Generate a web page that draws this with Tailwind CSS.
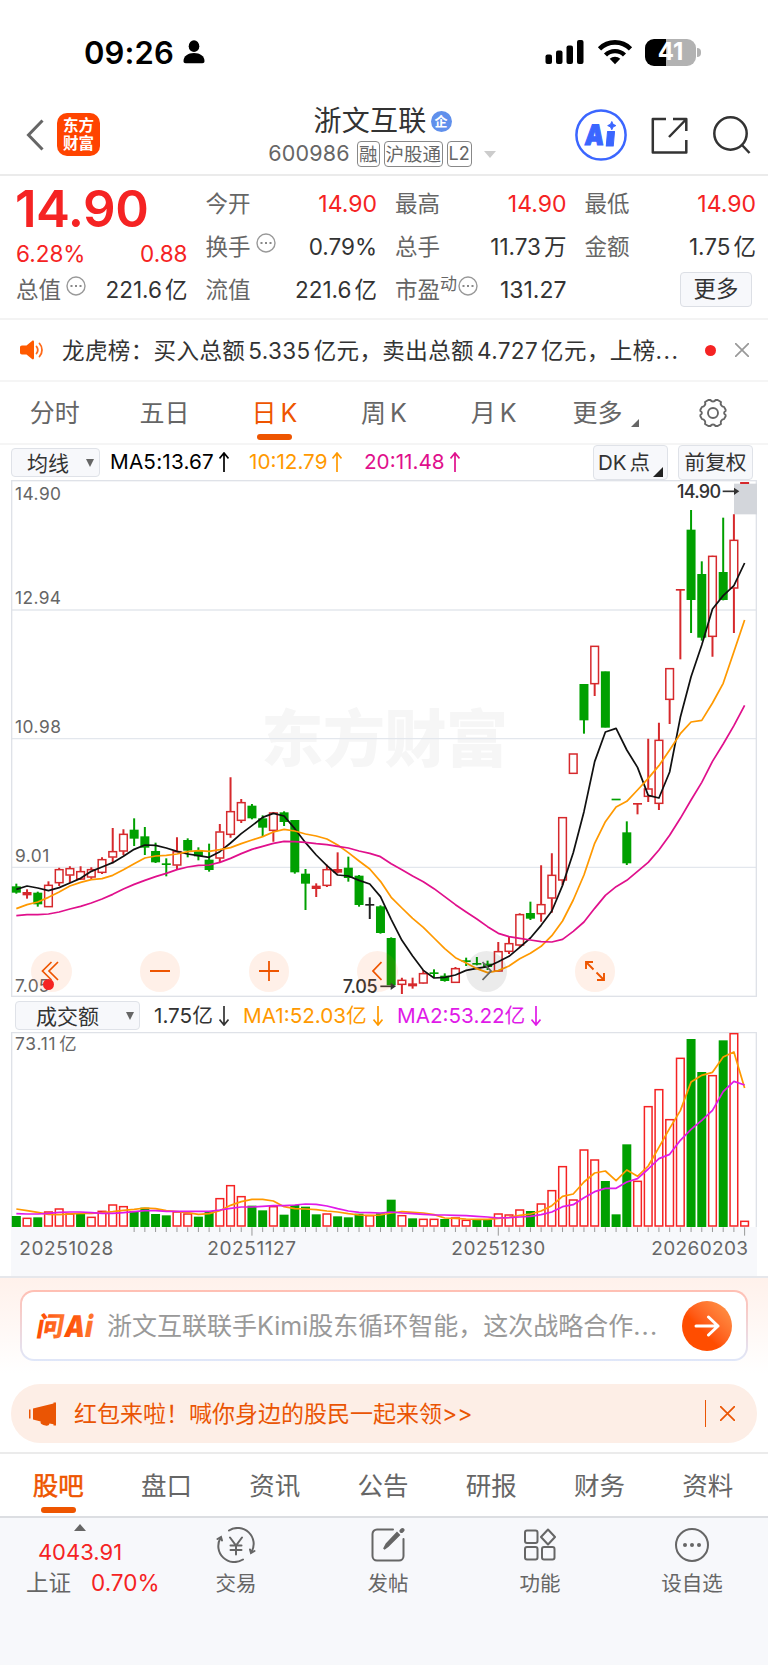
<!DOCTYPE html>
<html lang="zh-CN">
<head>
  <meta charset="UTF-8">
  <meta name="viewport" content="width=device-width, initial-scale=1.0">
  <title>浙文互联 600986</title>
  <script src="https://cdn.jsdelivr.net/npm/@tailwindcss/browser@4"></script>
</head>
<body class="w-[768px] h-[1665px] overflow-hidden bg-white text-[#333] font-['Inter','Noto_Sans_CJK_SC',sans-serif] leading-none whitespace-nowrap flex flex-col">

  <!-- Status Bar -->
  <div class="h-[104px] pl-[84px] pr-[67px] flex items-center justify-between text-black">
    <div class="flex items-center gap-[9px]">
      <span class="text-[31px] font-semibold tracking-[0.100px]">09:26</span>
      <svg class="w-[22px] h-[24px]" viewBox="0 0 22 24"><ellipse cx="11" cy="6.2" rx="5.3" ry="5.9"/><path d="M0.5 21c0-5 4.500-8 10.500-8s10.500 3 10.500 8c0 1.500-.8 2.200-2.200 2.200H2.700C1.300 23.200 .5 22.500 .5 21z"/></svg>
    </div>
    <div class="flex items-center">
      <svg class="w-[40px] h-[26px] mr-[12px]" viewBox="0 0 40 26"><rect x="0.500" y="15.500" width="6.500" height="9.500" rx="2"/><rect x="11" y="11.500" width="6.500" height="13.500" rx="2"/><rect x="21.500" y="6.500" width="6.500" height="18.500" rx="2"/><rect x="32" y="1" width="6.500" height="24" rx="2"/></svg>
      <svg class="w-[36px] h-[26px] mr-[12px]" viewBox="0 0 36 26" fill="none" stroke="#000"><path d="M2.500 9.800a22 22 0 0 1 31 0" stroke-width="4.600"/><path d="M8.500 16a13.500 13.500 0 0 1 19 0" stroke-width="4.400"/><path d="M18 25.300l-5.300-5.500a7.600 7.600 0 0 1 10.600 0z" fill="#000" stroke="none"/></svg>
      <div class="relative w-[51px] h-[27px] rounded-[9px] bg-linear-to-r from-black from-41% to-[#b2b2b2] to-41% flex items-center justify-center text-white text-[24px] font-bold">41</div>
      <div class="w-[4px] h-[9px] ml-[1px] rounded-r-full bg-[#b2b2b2]"></div>
    </div>
  </div>

  <!-- Header -->
  <header class="h-[72px] border-b-2 border-[#ebebeb] grid grid-cols-3 relative">
    <div class="flex items-center pl-[26px] gap-[13px] pb-[9px]">
      <svg class="w-[18px] h-[32px]" viewBox="0 0 18 32" fill="none" stroke="#666" stroke-width="3"><path d="M16.500 1.500L2.500 16l14 14.500"/></svg>
      <div class="w-[43px] h-[43px] rounded-[10px] bg-[#ff4400] text-white font-bold text-[15.500px] leading-[18px] flex flex-col items-center justify-center"><span>东方</span><span>财富</span></div>
    </div>
    <div class="flex flex-col items-center">
      <div class="flex items-center h-[32px] gap-[4px] pt-[2px] pr-[3px]">
        <span class="text-[28px] tracking-[0.300px]">浙文互联</span>
        <span class="size-[21px] rounded-full bg-[#6090ec] text-white text-[13px] font-bold flex items-center justify-center">企</span>
      </div>
      <div class="flex items-center h-[37px] gap-[4px] pb-[1px] pr-[4px] text-[#666]">
        <span class="text-[21.500px] tracking-[0.150px] mr-[3px]">600986</span>
        <span class="h-[26px] w-[23px] border-[1.500px] border-[#888] rounded-[4px] text-[18.500px] flex items-center justify-center">融</span>
        <span class="h-[26px] w-[59px] border-[1.500px] border-[#888] rounded-[4px] text-[18.500px] flex items-center justify-center">沪股通</span>
        <span class="h-[26px] w-[25px] border-[1.500px] border-[#888] rounded-[4px] text-[18px] flex items-center justify-center">L2</span>
        <svg class="w-[12px] h-[7px] ml-[8px]" viewBox="0 0 12 7"><path d="M0 0h12L6 7z" fill="#ccc"/></svg>
      </div>
    </div>
    <div class="flex items-center justify-end pr-[17px] pb-[8px]">
      <svg class="w-[52px] h-[52px] mr-[24px]" viewBox="0 0 52 52"><circle cx="26" cy="26" r="24.600" fill="none" stroke="#3b66ff" stroke-width="2.500"/><g fill="#3b66ff" transform="translate(3 0) skewX(-5)"><text x="9.500" y="36" font-size="28" font-weight="900" font-family="Inter" textLength="19" lengthAdjust="spacingAndGlyphs" stroke="#3b66ff" stroke-width="1.200">A</text><path d="M31.500 22.500h7v14.500h-7z" stroke="#3b66ff" stroke-linejoin="round"/></g><path d="M36.800 12.500l1.300 2.800 2.800 1.300-2.800 1.300-1.300 2.800-1.300-2.800-2.800-1.300 2.800-1.300z" fill="#3b66ff" stroke="#3b66ff"/></svg>
      <svg class="w-[37px] h-[37px] mr-[25px]" viewBox="0 0 37 37" fill="none" stroke="#333" stroke-width="2.500" stroke-linejoin="round"><path d="M15 2H1.800v33.500h33.500V23M22 2h13.300v12M35 2.500L18 20"/></svg>
      <svg class="w-[38px] h-[38px]" viewBox="0 0 38 38" fill="none" stroke="#333" stroke-width="2.500"><circle cx="17.500" cy="17.500" r="16.200"/><path d="M28.500 28.500l8 8.500"/></svg>
    </div>
  </header>

  <!-- Quote -->
  <section class="h-[144px] border-b-2 border-[#f3f3f3] pl-[16px] pr-[12px] pt-[7px] grid grid-cols-4 gap-x-[18px] text-[22.500px]">
    <div class="flex flex-col text-[#f52323]">
      <div class="h-[50px] -ml-[1px] flex items-center text-[51px] font-semibold tracking-[-0.500px]">14.90</div>
      <div class="h-[42px] flex items-center justify-between"><span>6.28%</span><span>0.88</span></div>
      <div class="h-[31px] flex items-center text-[#333]">
        <span class="text-[#666]">总值</span>
        <svg class="size-[20px] ml-[5px] mb-[9px]" viewBox="0 0 20 20"><circle cx="10" cy="10" r="9" fill="none" stroke="#999" stroke-width="1.400"/><path d="M4.500 9h2v2h-2zM9 9h2v2H9zM13.500 9h2v2h-2z" fill="#888"/></svg>
        <span class="ml-auto">221.6<span class="ml-[3px]">亿</span></span>
      </div>
    </div>
    <div class="flex flex-col">
      <div class="h-[43px] flex items-center justify-between"><span class="text-[#666]">今开</span><span class="text-[#f52323] text-[23px]">14.90</span></div>
      <div class="h-[43px] flex items-center">
        <span class="text-[#666]">换手</span>
        <svg class="size-[20px] ml-[5px] mb-[9px]" viewBox="0 0 20 20"><circle cx="10" cy="10" r="9" fill="none" stroke="#999" stroke-width="1.400"/><path d="M4.500 9h2v2h-2zM9 9h2v2H9zM13.500 9h2v2h-2z" fill="#888"/></svg>
        <span class="ml-auto">0.79%</span>
      </div>
      <div class="h-[43px] flex items-center justify-between"><span class="text-[#666]">流值</span><span>221.6<span class="ml-[3px]">亿</span></span></div>
    </div>
    <div class="flex flex-col">
      <div class="h-[43px] flex items-center justify-between"><span class="text-[#666]">最高</span><span class="text-[#f52323] text-[23px]">14.90</span></div>
      <div class="h-[43px] flex items-center justify-between"><span class="text-[#666]">总手</span><span>11.73<span class="ml-[3px]">万</span></span></div>
      <div class="h-[43px] flex items-center">
        <span class="text-[#666]">市盈</span><span class="text-[17px] text-[#666] mb-[13px]">动</span>
        <svg class="size-[20px] ml-[1px] mb-[9px]" viewBox="0 0 20 20"><circle cx="10" cy="10" r="9" fill="none" stroke="#999" stroke-width="1.400"/><path d="M4.500 9h2v2h-2zM9 9h2v2H9zM13.500 9h2v2h-2z" fill="#888"/></svg>
        <span class="ml-auto text-[23px]">131.27</span>
      </div>
    </div>
    <div class="flex flex-col">
      <div class="h-[43px] flex items-center justify-between"><span class="text-[#666]">最低</span><span class="text-[#f52323] text-[23px]">14.90</span></div>
      <div class="h-[43px] flex items-center justify-between"><span class="text-[#666]">金额</span><span>1.75<span class="ml-[3px]">亿</span></span></div>
      <div class="h-[43px] flex items-center justify-end pr-[4px]"><button class="w-[72px] h-[35px] mb-[3px] rounded-[4px] border border-[#dcdfe5] bg-[#f7f8fb] pt-[1px]">更多</button></div>
    </div>
  </section>

  <!-- News -->
  <section class="h-[62px] border-b-2 border-[#f5f5f5] pl-[20px] pr-[19px] flex items-center text-[22.500px]">
    <svg class="w-[24px] h-[20px] mr-[18px]" viewBox="0 0 24 20"><path d="M2 5.500h4.500L12 1c1-.8 2-.3 2 1v16c0 1.300-1 1.800-2 1l-5.500-4.500H2c-1.300 0-2-.7-2-2v-5c0-1.300.7-2 2-2z" fill="#ff5a00"/><path d="M16.500 6.500c1.500 2 1.500 5 0 7M19.500 3.500c3.300 3.500 3.300 9.500 0 13" fill="none" stroke="#ff6a1a" stroke-width="1.800" stroke-linecap="round"/></svg>
    <span class="tracking-[0.400px] pt-[2px]">龙虎榜：买入总额<span class="mx-[3px]">5.335</span>亿元，卖出总额<span class="mx-[3px]">4.727</span>亿元，上榜<span class="tracking-[1.500px]">...</span></span>
    <span class="size-[11px] rounded-full bg-[#f52323] ml-auto mr-[19px]"></span>
    <svg class="size-[14px]" viewBox="0 0 14 14" stroke="#999" stroke-width="1.700"><path d="M0 0l14 14M14 0L0 14"/></svg>
  </section>

  <!-- Period Tabs -->
  <nav class="h-[63px] border-b-2 border-[#f5f5f5] grid grid-cols-7 text-[25px] text-[#666]">
    <div class="flex items-center justify-center pt-[2px]">分时</div>
    <div class="flex items-center justify-center pt-[2px]">五日</div>
    <div class="relative flex items-center justify-center pt-[2px] gap-[4px] text-[#ee5500]">日<span>K</span><div class="absolute bottom-[3px] w-[35px] h-[6px] rounded-[3px] bg-[#ee5500]"></div></div>
    <div class="flex items-center justify-center pt-[2px] gap-[4px]">周<span>K</span></div>
    <div class="flex items-center justify-center pt-[2px] gap-[4px]">月<span>K</span></div>
    <div class="flex items-center justify-center pt-[2px] pl-[5px] gap-[9px]">更多<svg class="w-[8px] h-[8px] mt-[18px]" viewBox="0 0 8 8"><path d="M8 0v8H0z" fill="#666"/></svg></div>
    <div class="flex items-center justify-center">
      <svg class="w-[30px] h-[30px]" viewBox="0 0 30 30" fill="none" stroke="#666" stroke-width="1.900" stroke-linejoin="round"><path d="M10.300 2h2.200c.9 2 4.100 2 5 0h2.200l3.300 2c-1 2.200.6 4.800 3 4.900l1.600 2.900v1.200c-2 1.200-2 2.800 0 4v1.200l-1.600 2.900c-2.400.1-4 2.700-3 4.900l-3.300 2h-2.200c-.9-2-4.100-2-5 0h-2.200l-3.300-2c1-2.200-.6-4.800-3-4.900l-1.600-2.900v-1.200c2-1.200 2-2.800 0-4v-1.200L4 8.900c2.400-.1 4-2.700 3-4.900z"/><circle cx="15" cy="15" r="5"/></svg>
    </div>
  </nav>

  <!-- Moving Averages -->
  <div class="h-[35px] px-[11px] flex items-center text-[20.700px]">
    <div class="w-[89px] h-[29px] rounded-[4px] border border-[#dfe2e8] bg-[#f7f8fb] flex items-center justify-between pl-[15px] pr-[5px] pt-[1px] text-[21px]">均线<svg class="w-[8px] h-[8px]" viewBox="0 0 8 8"><path d="M0 0h8L4 8z" fill="#666"/></svg></div>
    <div class="ml-[10px] w-[139px] flex items-center gap-[5px] text-black"><span class="tracking-[0.200px]">MA5:13.67</span><svg class="w-[10px] h-[20px]" viewBox="0 0 10 20" fill="none" stroke="currentColor" stroke-width="1.700"><path d="M5 20V1M0.500 6.500L5 1l4.500 5.500"/></svg></div>
    <div class="w-[115px] flex items-center gap-[5px] text-[#ff9900]"><span>10:12.79</span><svg class="w-[10px] h-[20px]" viewBox="0 0 10 20" fill="none" stroke="currentColor" stroke-width="1.700"><path d="M5 20V1M0.500 6.500L5 1l4.500 5.500"/></svg></div>
    <div class="flex items-center gap-[5px] text-[#e0108c]"><span>20:11.48</span><svg class="w-[10px] h-[20px]" viewBox="0 0 10 20" fill="none" stroke="currentColor" stroke-width="1.700"><path d="M5 20V1M0.500 6.500L5 1l4.500 5.500"/></svg></div>
    <div class="ml-auto mr-[10px] w-[75px] h-[35px] rounded-[4px] border border-[#dfe2e8] bg-[#f7f8fb] relative flex items-center pl-[4px] pt-[2px] gap-[3px] text-[20.500px]">DK<span>点</span><svg class="absolute right-[4px] bottom-[2px] w-[10px] h-[10px]" viewBox="0 0 10 10"><path d="M10 0v10H0z" fill="#222"/></svg></div>
    <div class="mr-[4px] w-[75px] h-[35px] rounded-[4px] border border-[#dfe2e8] bg-[#f7f8fb] flex items-center justify-center pt-[2px] text-[20.700px]">前复权</div>
  </div>

  <!-- Candles -->
  <div class="relative h-[517px] px-[11px]">
    <svg id="kline" class="w-[746px] h-[517px]" viewBox="33 -780 2238 1551"></svg>
    <!-- Chart controls -->
    <div class="absolute left-[31px] top-[471px] flex gap-[68.300px]">
      <div class="relative size-[40.500px] rounded-full bg-[#ff6a1a]/10 flex items-center justify-center">
        <svg class="w-[18px] h-[20px] mr-[3px]" viewBox="0 0 18 20" fill="none" stroke="#ee5500" stroke-width="1.700"><path d="M10.500 1L1.500 10l9 9M17 1l-9 9 9 9"/></svg>
        <span class="absolute left-[12px] top-[28px] size-[11px] rounded-full bg-[#f52323]"></span>
      </div>
      <div class="size-[40.500px] rounded-full bg-[#ff6a1a]/10 flex items-center justify-center"><div class="w-[20px] h-[2px] bg-[#ee5500]"></div></div>
      <div class="size-[40.500px] rounded-full bg-[#ff6a1a]/10 flex items-center justify-center"><svg class="size-[20px]" viewBox="0 0 20 20" stroke="#ee5500" stroke-width="1.800"><path d="M10 0v20M0 10h20"/></svg></div>
      <div class="size-[40.500px] rounded-full bg-[#ff6a1a]/10 flex items-center justify-center"><svg class="w-[10px] h-[20px] mr-[2px]" viewBox="0 0 10 20" fill="none" stroke="#ee5500" stroke-width="1.700"><path d="M9.500 1L1 10l8.500 9"/></svg></div>
      <div class="size-[40.500px] rounded-full bg-black/8 flex items-center justify-center"><svg class="w-[10px] h-[20px] ml-[2px]" viewBox="0 0 10 20" fill="none" stroke="#666" stroke-width="1.700"><path d="M.5 1L9 10 .5 19"/></svg></div>
      <div class="size-[40.500px] rounded-full bg-[#ff6a1a]/10 flex items-center justify-center"><svg class="size-[20px]" viewBox="0 0 20 20" fill="none" stroke="#ee5500" stroke-width="1.900"><path d="M1 8V1h7M1 1l7.500 7.500M19 12v7h-7M19 19l-7.500-7.500"/></svg></div>
    </div>
  </div>

  <!-- Volume Legend -->
  <div class="h-[35px] pl-[15px] pt-[2px] flex items-center text-[20.700px]">
    <div class="w-[125px] h-[29px] rounded-[4px] border border-[#dfe2e8] bg-[#f7f8fb] flex items-center justify-between pl-[20px] pr-[5px] pt-[1px] text-[21px]">成交额<svg class="w-[8px] h-[8px]" viewBox="0 0 8 8"><path d="M0 0h8L4 8z" fill="#666"/></svg></div>
    <div class="ml-[14px] w-[89px] flex items-center gap-[6px] pt-[1px]"><span>1.75亿</span><svg class="w-[10px] h-[20px]" viewBox="0 0 10 20" fill="none" stroke="currentColor" stroke-width="1.700"><path d="M5 0v19M.5 13.500L5 19l4.500-5.500"/></svg></div>
    <div class="w-[154px] flex items-center gap-[6px] pt-[1px] text-[#ff9900]"><span>MA1:52.03亿</span><svg class="w-[10px] h-[20px]" viewBox="0 0 10 20" fill="none" stroke="currentColor" stroke-width="1.700"><path d="M5 0v19M.5 13.500L5 19l4.500-5.500"/></svg></div>
    <div class="flex items-center gap-[6px] pt-[1px] text-[#e01ae8]"><span>MA2:53.22亿</span><svg class="w-[10px] h-[20px]" viewBox="0 0 10 20" fill="none" stroke="currentColor" stroke-width="1.700"><path d="M5 0v19M.5 13.500L5 19l4.500-5.500"/></svg></div>
  </div>

  <!-- Volume -->
  <div class="h-[244px] px-[11px]">
    <svg id="volume" class="w-[746px] h-[244px]" viewBox="33 111 2238 732"></svg>
  </div>

  <!-- Ask AI -->
  <section class="h-[108px] border-t-2 border-[#e6e7eb] bg-linear-to-b from-[#fff1eb] to-white to-90% pt-[12px] px-[20px]">
    <div class="h-[71px] rounded-[14px] p-[2px] bg-linear-to-b from-[#ffbfb3] to-[#dfe7f9]">
      <div class="h-full rounded-[12px] bg-white flex items-center pl-[8px] pr-[14px]">
        <svg class="w-[68px] h-[42px]" viewBox="0 0 68 42"><defs><linearGradient id="askFill" x1="0" x2="1"><stop offset="0" stop-color="#ff4a00"/><stop offset="1" stop-color="#ff7a33"/></linearGradient></defs><g fill="url(#askFill)" font-weight="900" transform="translate(11 0) skewX(-10)"><text x="0" y="31" font-size="27" font-family="Noto Sans CJK SC">问</text><text x="28" y="32" font-size="30" font-family="Inter" textLength="28" lengthAdjust="spacingAndGlyphs">Ai</text></g></svg>
        <span class="ml-[9px] text-[25px] text-[#999] pt-[2px]">浙文互联联手Kimi股东循环智能，这次战略合作<span class="tracking-[1.200px]">...</span></span>
        <div class="ml-auto shrink-0 size-[50px] rounded-full bg-linear-to-tr from-[#ff4d00] from-40% to-[#ff9a4d] flex items-center justify-center">
          <svg class="w-[26px] h-[22px]" viewBox="0 0 26 22" fill="none" stroke="#fff" stroke-width="3" stroke-linecap="round" stroke-linejoin="round"><path d="M2 11h22M14.500 2l9.500 9-9.500 9"/></svg>
        </div>
      </div>
    </div>
  </section>

  <!-- Promo -->
  <section class="h-[70px] px-[11px] border-b-2 border-[#ebebeb]">
    <div class="h-[59px] rounded-[29px] bg-[#fdeee6] flex items-center pl-[17px] pr-[22px] text-[#ea5504]">
      <svg class="w-[28px] h-[24px] mr-[18px]" viewBox="0 0 28 24" fill="#ea5504"><path d="M1 7.500h1.500v9H1zM5 6.500L25.500 1.500V.5H28v23h-2.500v-1.200l-4-.8c-.5 2-2 2.500-4 2-1.500-.3-3-.8-4-1.500-1-.6-1-1.500-.8-2.500L5 17.500z"/></svg>
      <span class="text-[23px] pt-[1px]">红包来啦！喊你身边的股民一起来领&gt;&gt;</span>
      <span class="ml-auto w-[1.500px] h-[27px] bg-[#ea5504]"></span>
      <svg class="size-[15px] ml-[14px]" viewBox="0 0 15 15" stroke="#ea5504" stroke-width="1.700"><path d="M0 0l15 15M15 0L0 15"/></svg>
    </div>
  </section>

  <!-- Section Tabs -->
  <nav class="h-[64px] border-b-2 border-[#dcdee2] px-[4px] pr-[6px] grid grid-cols-7 text-[25.500px] text-[#666]">
    <div class="relative flex items-center justify-center pt-[1px] text-[#ee5500] [-webkit-text-stroke:0.5px_#ee5500]">股吧<div class="absolute bottom-[3px] w-[35px] h-[6px] rounded-[3px] bg-[#ee5500]"></div></div>
    <div class="flex items-center justify-center pt-[1px]">盘口</div>
    <div class="flex items-center justify-center pt-[1px]">资讯</div>
    <div class="flex items-center justify-center pt-[1px]">公告</div>
    <div class="flex items-center justify-center pt-[1px]">研报</div>
    <div class="flex items-center justify-center pt-[1px]">财务</div>
    <div class="flex items-center justify-center pt-[1px]">资料</div>
  </nav>

  <!-- Bottom Bar -->
  <footer class="flex-1 bg-[#f7f8fb] grid grid-cols-[160px_repeat(4,152px)] text-[20.500px] text-[#666]">
    <div class="flex flex-col items-center pt-[6px]">
      <svg class="w-[12px] h-[7px]" viewBox="0 0 12 7"><path d="M6 0l6 7H0z" fill="#666"/></svg>
      <span class="mt-[9px] text-[22px] text-[#f52323] h-[24px] flex items-center">4043.91</span>
      <div class="mt-[7px] w-full pl-[26px] flex items-center gap-[20px] text-[22.500px] h-[24px]"><span>上证</span><span class="text-[#f52323] text-[22.500px]">0.70%</span></div>
    </div>
    <div class="flex flex-col items-center pt-[9px]">
      <svg class="w-[40px] h-[36px]" viewBox="0 0 40 36" fill="none" stroke="#666" stroke-width="2" stroke-linecap="round"><path d="M13 3.500a16 16 0 0 1 22.500 21.500M27 32.500A16 16 0 0 1 4.500 11M1.500 12l3.500-2 1 3.500M38.500 24l-3.500 2-1-3.500M14 10.500l6 8 6-8M20 18.500v9M14.500 18.500h11M14.500 23h11"/></svg>
      <span class="mt-[9px] h-[24px] flex items-center">交易</span>
    </div>
    <div class="flex flex-col items-center pt-[9px]">
      <svg class="w-[34px] h-[36px]" viewBox="0 0 34 36" fill="none" stroke="#666" stroke-width="2" stroke-linecap="round"><path d="M22 2.500H6a4.500 4.500 0 0 0-4.500 4.500v22a4.500 4.500 0 0 0 4.500 4.500h22a4.500 4.500 0 0 0 4.500-4.500V12"/><path d="M13 22l2.500-5L26 6l2 2-11 11z" fill="#666"/><path d="M30.500 4l1-1" stroke-width="4"/></svg>
      <span class="mt-[9px] h-[24px] flex items-center">发帖</span>
    </div>
    <div class="flex flex-col items-center pt-[9px]">
      <svg class="w-[32px] h-[36px]" viewBox="0 0 32 36" fill="none" stroke="#666" stroke-width="2" stroke-linejoin="round"><rect x="1" y="3.500" width="12.500" height="12.500" rx="2"/><rect x="1" y="20" width="12.500" height="12.500" rx="2"/><rect x="18" y="20" width="12.500" height="12.500" rx="2"/><path d="M24 2.500l7 7.500-7 7.500-7-7.500z"/></svg>
      <span class="mt-[9px] h-[24px] flex items-center">功能</span>
    </div>
    <div class="flex flex-col items-center pt-[9px]">
      <svg class="w-[36px] h-[36px]" viewBox="0 0 36 36" fill="none" stroke="#666" stroke-width="2"><circle cx="18" cy="18" r="16"/><g fill="#666" stroke="none"><circle cx="11" cy="18" r="2"/><circle cx="18" cy="18" r="2"/><circle cx="25" cy="18" r="2"/></g></svg>
      <span class="mt-[9px] h-[24px] flex items-center">设自选</span>
    </div>
  </footer>

  <script>
    // [colour, high, body top, body bottom, low]
    const candles = [
      ['g',431,440,457,461],['r',448,457,465,476],['g',455,459,492,500],['r',424,435,501,501],['r',383,388,429,438],
      ['r',379,385,406,428],['r',379,394,418,420],['r',382,388,412,417],['r',352,358,398,402],['r',264,334,352,370],
      ['r',268,282,334,345],['g',235,270,295,318],['g',261,290,322,345],['g',308,334,366,369],['g',355,371,374,409],
      ['r',292,334,376,388],['g',295,301,331,352],['g',322,334,348,361],['g',311,360,389,395],['r',252,275,355,366],
      ['r',112,214,284,293],['r',177,187,242,249],['g',192,198,234,238],['g',226,236,262,288],['r',216,218,272,305],
      ['g',214,218,245,258],['g',240,241,396,401],['g',387,402,430,510],['r',430,438,446,471],['r',374,388,437,441],
      ['r',337,388,397,400],['g',350,384,413,425],['g',405,408,494,500],['k',472,493,496,537],['g',496,500,578,581],
      ['g',592,595,735,735],['r',713,720,734,762],['r',713,731,738,746],['r',690,700,730,731],['g',688,698,701,713],
      ['g',700,708,722,725],['r',681,685,728,728],['g',653,662,665,678],['g',651,670,673,676],['g',662,672,680,690],
      ['r',606,634,694,695],['r',588,610,635,642],['r',520,523,616,620],['g',485,520,535,540],['r',376,493,522,545],
      ['r',340,405,475,518],['r',231,232,421,436],['r',41,41,101,101],['g',-167,-167,-60,-19],['r',-282,-282,-168,-132],
      ['g',-205,-205,-38,-38],['g',178,177,180,178],['g',244,278,369,375],['r',190,190,193,223],['r',-4,146,170,186],
      ['r',-52,0,191,210],['r',-215,-215,-121,-48],['r',-452,-452,-449,-242],['g',-690,-630,-421,-321],['g',-536,-497,-308,-298],
      ['r',-553,-552,-310,-250],['g',-667,-503,-421,-419],['r',-677,-600,-455,-321],['r',-772,-773,-769,-770]
    ];
    const ma5 = [448,438,444,452,443,429,415,394,381,368,349,328,315,316,324,334,342,347,352,335,309,281,257,232,220,228,266,308,345,377,405,408,421,432,470,538,601,648,691,714,712,705,691,685,680,665,649,622,594,556,513,436,338,215,65,-24,-35,30,82,166,174,96,-68,-190,-285,-393,-433,-463,-531];
    const ma10 = [506,494,486,472,456,438,427,419,416,406,389,371,354,348,346,342,335,332,334,329,323,311,300,290,276,268,273,282,288,297,315,338,363,387,424,472,504,535,562,594,626,653,669,686,698,692,678,656,640,619,587,543,480,405,310,245,201,184,150,115,77,30,-19,-54,-59,-111,-170,-265,-360];
    const ma20 = [527,524,524,522,516,507,499,489,477,463,447,433,421,410,400,389,381,376,375,367,355,341,328,319,310,304,305,307,311,314,319,324,333,340,350,371,389,408,425,446,470,494,516,537,560,580,590,595,600,605,606,598,574,546,505,466,440,421,394,367,330,286,235,180,127,64,12,-43,-104];
    const volumes = 'g663 r669 g667 r650 r641 r656 g656 r666 r648 r629 r634 g648 g638 g657 g661 r650 r656 g665 g648 r610 r571 r604 g632 g646 r634 g659 g630 g635 g658 r656 g664 g667 g656 r661 g655 g614 r661 g670 r672 r672 g672 r668 r675 g674 g674 r656 r659 r644 g648 r626 r586 r514 r614 r464 r494 g558 g658 g448 r558 r334 r283 r373 r189 g132 g231 r241 g136 r115 r678'.split(' ');
    const vma1 = [642,647,652,658,659,657,655,655,653,650,646,643,639,641,647,650,653,658,656,647,631,620,613,613,618,635,641,642,644,648,651,656,660,661,660,654,650,652,654,659,669,670,672,673,673,670,667,661,657,648,632,604,597,561,534,528,557,525,544,513,457,400,347,261,241,232,186,171,279];
    const vma2 = [656,657,657,655,652,651,651,653,655,655,653,650,647,647,649,649,649,649,649,645,640,636,636,634,632,632,630,627,628,633,641,648,652,653,654,651,654,656,658,660,660,661,662,664,666,669,668,666,664,659,651,635,629,608,590,580,580,561,551,522,491,478,436,403,376,346,290,259,270];

    const cx = i => 49 + i * 32.13;
    const colors = { g: '#00a000', r: '#d6292c', k: '#222' };

    function line(values, color) {
      const pts = values.map((v, i) => `${cx(i)},${v}`).join(' ');
      return `<polyline points="${pts}" fill="none" stroke="${color}" stroke-width="5.200" stroke-linejoin="round"/>`;
    }

    function label(x, y, text, width, size, color, extra = '') {
      return `<text x="${x}" y="${y}" font-size="${size}" fill="${color}" textLength="${width}" ${extra}>${text}</text>`;
    }

    function drawKline() {
      let s = label(784, 66, '东方财富', 740, 186, '#f6f6f6', 'font-weight="900"');
      s += '<path d="M33 -390H2271M33 -4H2271M33 382H2271" stroke="#e3e7ed" stroke-width="4"/>';
      s += '<rect x="35" y="-778" width="2234" height="1547" fill="none" stroke="#dfe2e8" stroke-width="4"/>';
      s += '<rect x="2202" y="-769" width="69" height="92" fill="#d3d6db"/>';
      s += label(45, -719, '14.90', 138, 52, '#666') + label(45, -407, '12.94', 138, 52, '#666');
      s += label(45, -20, '10.98', 138, 52, '#666') + label(45, 367, '9.01', 103, 52, '#666') + label(45, 755, '7.05', 103, 52, '#666');
      candles.forEach(([c, hi, top, bot, lo], i) => {
        const x = cx(i), col = colors[c];
        if (c === 'r' && bot - top > 10) {
          s += `<path d="M${x} ${hi}V${top}M${x} ${bot}V${lo}" stroke="${col}" stroke-width="6"/>`;
          s += `<rect x="${x - 11.5}" y="${top + 1}" width="23" height="${bot - top - 2}" fill="none" stroke="${col}" stroke-width="4.500"/>`;
        } else {
          s += `<path d="M${x} ${hi}V${lo}" stroke="${col}" stroke-width="6"/>`;
          s += `<rect x="${x - 13.5}" y="${top - 1}" width="27" height="${bot - top + 2}" fill="${col}"/>`;
        }
      });
      s += line(ma5, '#111') + line(ma10, '#ff9900') + line(ma20, '#e0108c');
      s += label(1028, 759, '7.05', 105, 54, '#333', 'font-weight="500"') + '<path d="M1141 739H1176" stroke="#333" stroke-width="5"/><path d="M1172 728l16 11-16 11z" fill="#333"/>';
      s += label(2031, -726, '14.90', 132, 54, '#333', 'font-weight="500"') + '<path d="M2168 -746H2206" stroke="#333" stroke-width="5"/><path d="M2202 -757l16 11-16 11z" fill="#333"/>';
      document.getElementById('kline').innerHTML = s;
    }

    function drawVolume() {
      let s = '<rect x="33" y="696" width="2238" height="147" fill="#f7f8fb"/>';
      s += '<path d="M35 696V113H2269V696" fill="none" stroke="#dfe2e8" stroke-width="4"/>';
      s += label(45, 166, '73.11', 122, 52, '#666') + '<text x="178" y="166" font-size="52" fill="#666">亿</text>';
      volumes.forEach((v, i) => {
        const x = cx(i), top = Number(v.slice(1));
        if (v[0] === 'g') s += `<rect x="${x - 13.5}" y="${top}" width="27" height="${696 - top}" fill="#00a000"/>`;
        else s += `<rect x="${x - 11.5}" y="${top + 1}" width="23" height="${692 - top}" fill="#fff" stroke="#f52323" stroke-width="4.500"/>`;
        if (i > 10) s += `<path d="M${x} 697V${i % 23 === 22 ? 722 : 711}" stroke="#999" stroke-width="3"/>`;
      });
      s += line(vma1, '#ff9900') + line(vma2, '#e01ae8');
      s += label(58, 780, '20251028', 282, 57, '#666') + label(622, 780, '20251127', 266, 57, '#666');
      s += label(1354, 780, '20251230', 282, 57, '#666') + label(1954, 780, '20260203', 290, 57, '#666');
      document.getElementById('volume').innerHTML = s;
    }

    drawKline();
    drawVolume();
  </script>
</body>
</html>
